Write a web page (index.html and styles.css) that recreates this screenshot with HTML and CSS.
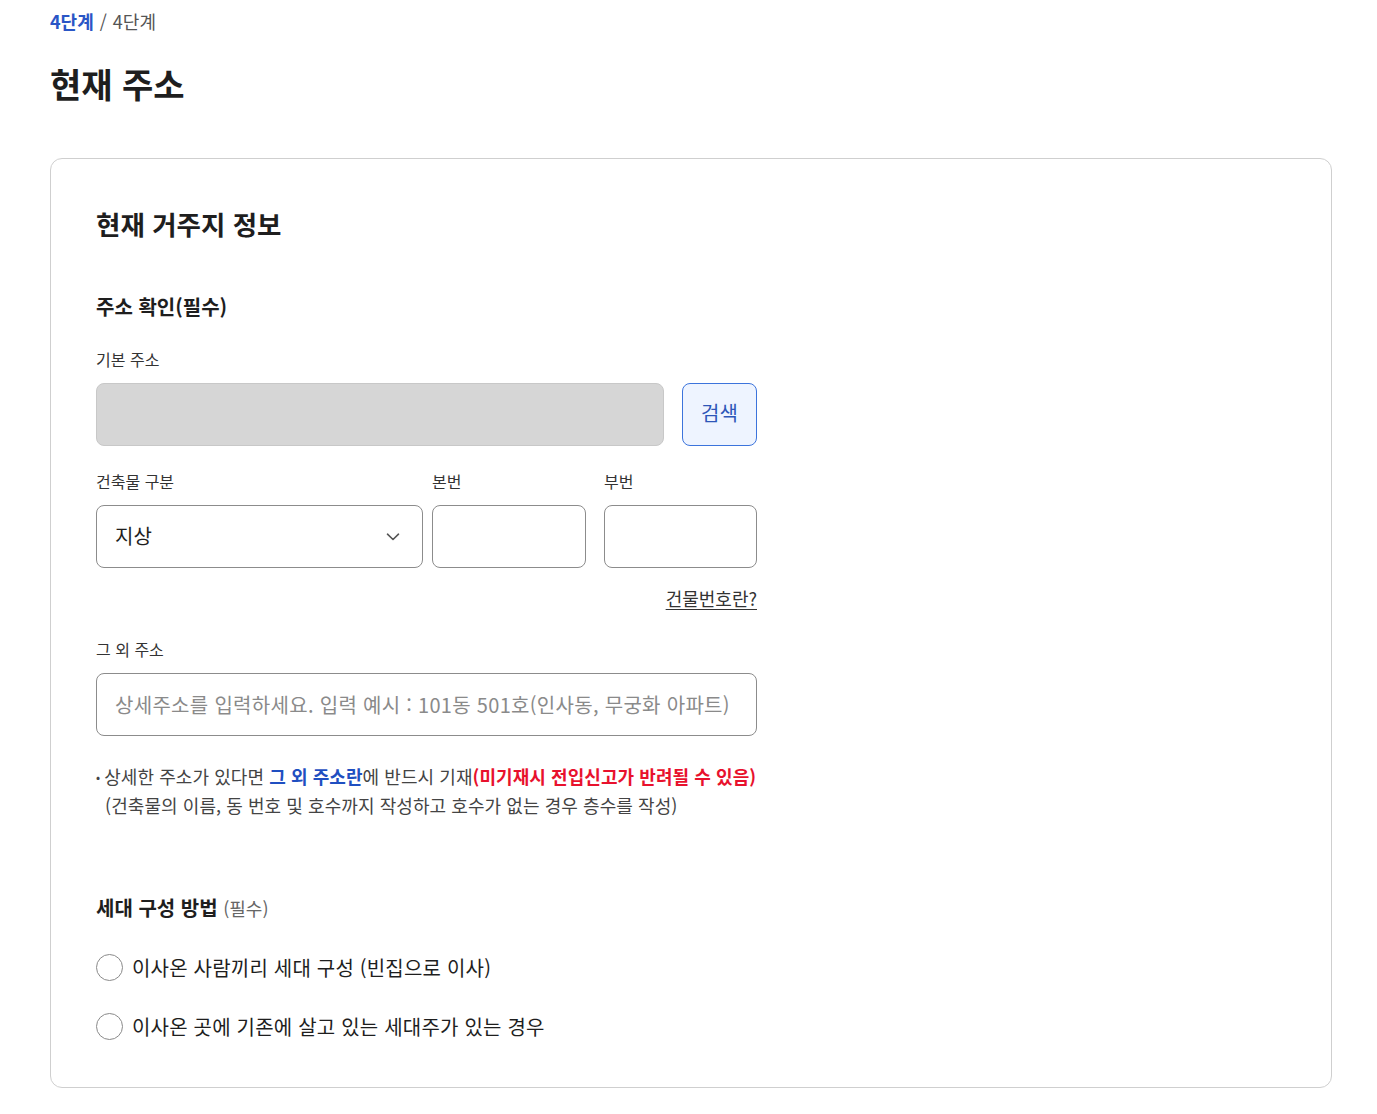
FILE: index.html
```html
<!DOCTYPE html>
<html lang="ko">
<head>
<meta charset="utf-8">
<title>현재 주소</title>
<link rel="stylesheet" href="styles.css">
</head>
<body>
<div class="page">
  <nav class="breadcrumb"><span class="crumb-current">4단계</span><span class="crumb-sep">/</span><span class="crumb-total">4단계</span></nav>
  <h1 class="page-title">현재 주소</h1>

  <section class="card">
    <h2 class="card-title">현재 거주지 정보</h2>

    <div class="form">
      <h3 class="section-title">주소 확인(필수)</h3>

      <label class="field-label label-basic">기본 주소</label>
      <div class="row-search">
        <div class="input input-disabled"></div>
        <button class="btn-search" type="button">검색</button>
      </div>

      <div class="row-building">
        <div class="col col-type">
          <label class="field-label">건축물 구분</label>
          <div class="input select">
            <span class="select-value">지상</span>
            <svg class="chevron" width="14" height="8" viewBox="0 0 14 8"><path d="M1.5 1.2 L7 6.5 L12.5 1.2" fill="none" stroke="#555" stroke-width="1.6" stroke-linecap="round" stroke-linejoin="round"/></svg>
          </div>
        </div>
        <div class="col col-main">
          <label class="field-label">본번</label>
          <div class="input"></div>
        </div>
        <div class="col col-sub">
          <label class="field-label">부번</label>
          <div class="input"></div>
        </div>
      </div>

      <div class="help-row"><a class="help-link" href="#">건물번호란?</a></div>

      <label class="field-label">그 외 주소</label>
      <div class="input input-text"><span class="placeholder">상세주소를 입력하세요. 입력 예시 : 101동 501호(인사동, 무궁화 아파트)</span></div>

      <div class="note">
        <p class="note-line"><span class="bullet">•</span>상세한 주소가 있다면 <strong class="em-blue">그 외 주소란</strong>에 반드시 기재<strong class="em-red">(미기재시 전입신고가 반려될 수 있음)</strong></p>
        <p class="note-line note-indent">(건축물의 이름, 동 번호 및 호수까지 작성하고 호수가 없는 경우 층수를 작성)</p>
      </div>

      <h3 class="section-title section-household">세대 구성 방법 <span class="required">(필수)</span></h3>

      <div class="radio-list">
        <label class="radio"><span class="radio-circle"></span><span class="radio-text">이사온 사람끼리 세대 구성 (빈집으로 이사)</span></label>
        <label class="radio"><span class="radio-circle"></span><span class="radio-text">이사온 곳에 기존에 살고 있는 세대주가 있는 경우</span></label>
      </div>
    </div>
  </section>
</div>
</body>
</html>
```

FILE: styles.css
```css
* { box-sizing: border-box; }
html, body { margin: 0; padding: 0; background: #fff; }
body {
  font-family: "Noto Sans CJK KR", "Noto Sans", sans-serif;
  color: #1e1e1e;
}
.page { padding: 9px 45px 26px 50px; }

.breadcrumb { font-size: 18px; line-height: 24px; color: #555; }
.crumb-current { color: #2a56c6; font-weight: 700; }
.crumb-sep { margin: 0 6px; color: #555; }
.crumb-total { color: #555; }

.page-title {
  margin: 29px 0 0;
  font-size: 34px;
  line-height: 44px;
  font-weight: 700;
  color: #1e1e1e;
}

.card {
  margin-top: 52px;
  border: 1px solid #cfcfcf;
  border-radius: 12px;
  padding: 47px 45px 46px 45px;
}
.card-title {
  margin: 0;
  font-size: 26.5px;
  line-height: 36px;
  font-weight: 700;
}

.form { width: 661px; }

.section-title {
  margin: 51px 0 0;
  font-size: 20px;
  line-height: 28px;
  font-weight: 700;
}
.field-label {
  display: block;
  font-size: 16px;
  line-height: 22px;
  color: #333;
  margin-bottom: 13px;
}
.label-basic { margin-top: 27px; }

.input {
  height: 63px;
  border: 1px solid #8c8c8c;
  border-radius: 8px;
  background: #fff;
}

.row-search { display: flex; gap: 18px; }
.input-disabled { flex: 1; background: #d6d6d6; border-color: #c8c8c8; }
.btn-search {
  width: 75px;
  height: 63px;
  border: 1px solid #3c74dc;
  border-radius: 8px;
  background: #eef4ff;
  color: #2d56b8;
  font-family: inherit;
  font-size: 20px;
  padding: 0 0 4px;
}

.row-building { display: flex; margin-top: 24px; }
.col-type { width: 327px; }
.col-main { width: 154px; margin-left: 9px; }
.col-sub { width: 153px; margin-left: 18px; }
.select {
  display: flex;
  align-items: center;
  justify-content: space-between;
  padding: 0 22px 3px 18px;
}
.select-value { font-size: 20px; color: #1e1e1e; }
.chevron { display: block; margin-top: 3px; }

.help-row { display: flex; justify-content: flex-end; margin: 18px 0 28px; }
.help-link {
  font-size: 18px;
  line-height: 24px;
  color: #333;
  text-decoration: underline;
  text-underline-offset: 3px;
}

.input-text {
  display: flex;
  align-items: center;
  padding: 0 18px 0;
  margin-top: 1px;
}
.placeholder { font-size: 20px; color: #8a8a8a; letter-spacing: 0.3px; white-space: nowrap; }

.note { margin-top: 26px; }
.note-line {
  margin: 0;
  font-size: 18px;
  line-height: 28px;
  color: #444;
  letter-spacing: 0.07px;
  white-space: nowrap;
}
.bullet { font-size: 12px; margin-right: 4px; vertical-align: 2px; }
.note-indent { padding-left: 9px; }
.em-blue { color: #1f4fc1; font-weight: 700; }
.em-red { color: #e8112d; font-weight: 700; }

.section-household { margin-top: 75px; }
.required { font-size: 18px; font-weight: 400; color: #666; }

.radio-list { display: flex; flex-direction: column; gap: 29px; margin-top: 30px; }
.radio { display: flex; align-items: center; height: 30px; }
.radio-circle {
  width: 27px;
  height: 27px;
  border: 1.5px solid #8a8a8a;
  border-radius: 50%;
  margin-right: 9px;
  flex: none;
}
.radio-text { font-size: 20px; color: #1e1e1e; letter-spacing: 0.2px; }
```
